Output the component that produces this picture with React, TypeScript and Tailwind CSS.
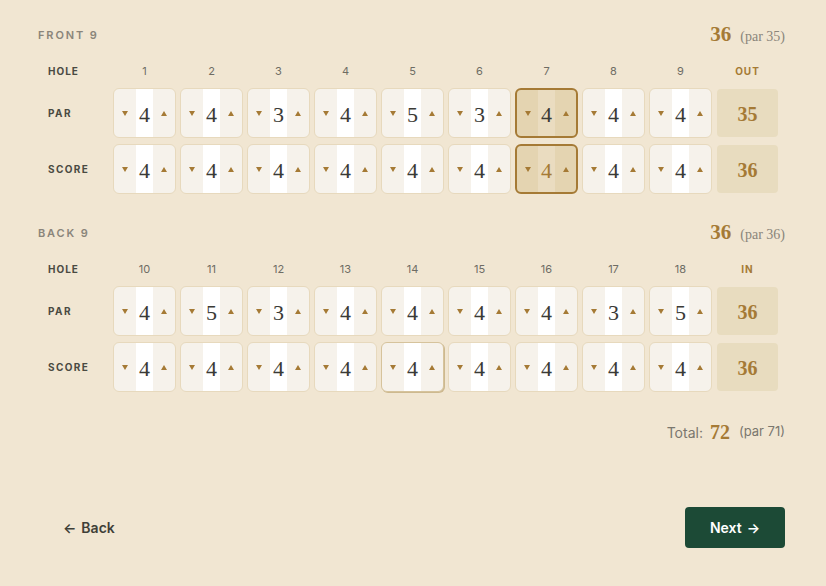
import React from "react"

type Nine = {
  title: string
  total: string
  holes: number[]
  par: number[]
  score: number[]
  sumLabel: string
}

const nines: Nine[] = [
  {
    title: "FRONT 9",
    total: "36",
    holes: [1, 2, 3, 4, 5, 6, 7, 8, 9],
    par: [4, 4, 3, 4, 5, 3, 4, 4, 4],
    score: [4, 4, 4, 4, 4, 4, 4, 4, 4],
    sumLabel: "OUT",
  },
  {
    title: "BACK 9",
    total: "36",
    holes: [10, 11, 12, 13, 14, 15, 16, 17, 18],
    par: [4, 5, 3, 4, 4, 4, 4, 3, 5],
    score: [4, 4, 4, 4, 4, 4, 4, 4, 4],
    sumLabel: "IN",
  },
]

const sans = "font-['Inter','Liberation_Sans',sans-serif]"
const serif = "font-['Liberation_Serif','DejaVu_Serif',serif]"

function Down() {
  return (
    <svg width="6" height="5" viewBox="0 0 6 5">
      <path d="M0 0h6L3 5z" fill="#a57a35" />
    </svg>
  )
}

function Up() {
  return (
    <svg width="6" height="5" viewBox="0 0 6 5">
      <path d="M0 5h6L3 0z" fill="#a57a35" />
    </svg>
  )
}

function Stepper({ value, active, hover, gold }: { value: number; active?: boolean; hover?: boolean; gold?: boolean }) {
  const box = active
    ? "border-2 border-[#a57a35] bg-[#e4d4b1]"
    : hover
      ? "border border-[#d6c39c] bg-[#f6f2eb] shadow-[1px_1px_0_#cdb98f]"
      : "border border-[#e7d9bd] bg-[#f6f2eb]"
  return (
    <div className={`flex h-[50px] w-[63px] shrink-0 overflow-hidden rounded-[6px] ${box}`}>
      <div className="flex flex-1 items-center justify-center">
        <Down />
      </div>
      <div
        className={`flex w-[17px] items-center justify-center pt-[3px] text-[22px] ${serif} ${
          active ? "bg-[#eadcc0]" : "bg-white"
        } ${gold ? "text-[#a57a35]" : "text-[#3a3a36]"}`}
      >
        {value}
      </div>
      <div className="flex flex-1 items-center justify-center">
        <Up />
      </div>
    </div>
  )
}

function SumBox({ value }: { value: number }) {
  return (
    <div
      className={`ml-[5px] flex h-[48px] w-[61px] shrink-0 items-center justify-center rounded-[4px] bg-[#e8dcbf] pt-[2px] text-[20px] font-bold text-[#a57a35] ${serif}`}
    >
      {value}
    </div>
  )
}

function Section({ nine, index }: { nine: Nine; index: number }) {
  const parSum = nine.par.reduce((a, b) => a + b, 0)
  const scoreSum = nine.score.reduce((a, b) => a + b, 0)
  return (
    <div>
      <div className="flex h-[28px] items-center justify-between">
        <span className={`text-[11px] font-semibold tracking-[0.17em] text-[#8a857a] ${sans}`}>{nine.title}</span>
        <span className={`flex items-baseline gap-[9px] ${serif}`}>
          <span className="text-[21px] font-bold text-[#a57a35]">{nine.total}</span>
          <span className="text-[14px] text-[#8a857a]">(par {parSum})</span>
        </span>
      </div>

      <div className="mt-[14px] flex h-[16px] items-center">
        <div className={`w-[75px] shrink-0 pl-[10px] text-[10px] font-bold tracking-[0.1em] text-[#4a4a42] ${sans}`}>HOLE</div>
        <div className="flex gap-1">
          {nine.holes.map((h) => (
            <div key={h} className={`w-[63px] text-center text-[11px] text-[#6e6c64] ${sans}`}>
              {h}
            </div>
          ))}
        </div>
        <div className={`ml-[5px] w-[61px] text-center text-[10px] font-bold tracking-[0.1em] text-[#a57a35] ${sans}`}>
          {nine.sumLabel}
        </div>
      </div>

      <div className="mt-[9px] flex flex-col gap-[6px]">
        {[
          { label: "PAR", values: nine.par, sum: parSum },
          { label: "SCORE", values: nine.score, sum: scoreSum },
        ].map((row, r) => (
          <div key={row.label} className="flex items-center">
            <div className={`w-[75px] shrink-0 pl-[10px] text-[10px] font-bold tracking-[0.14em] text-[#4a4a42] ${sans}`}>
              {row.label}
            </div>
            <div className="flex gap-1">
              {row.values.map((v, i) => (
                <Stepper
                  key={i}
                  value={v}
                  active={index === 0 && i === 6}
                  gold={index === 0 && i === 6 && r === 1}
                  hover={index === 1 && i === 4 && r === 1}
                />
              ))}
            </div>
            <SumBox value={row.sum} />
          </div>
        ))}
      </div>
    </div>
  )
}

export default function App() {
  return (
    <div className={`min-h-[586px] w-full bg-[#f1e6d2] pl-[38px] pr-[41px] pt-[21px] ${sans}`}>
      <div className="flex flex-col gap-[25px]">
        {nines.map((n, i) => (
          <Section key={n.title} nine={n} index={i} />
        ))}
      </div>

      <div className="mt-[29px] flex h-[22px] items-center justify-end gap-[7px]">
        <span className="text-[14px] text-[#7a776e]">Total:</span>
        <span className={`text-[20px] font-bold text-[#a57a35] ${serif}`}>72</span>
        <span className="ml-[2px] text-[13px] text-[#7a776e]">(par 71)</span>
      </div>

      <div className="mt-[64px] flex items-center justify-between">
        <button className="flex h-[41px] items-center gap-[5px] px-[25px] text-[14px] font-semibold text-[#3f3f38]">
          <span>←</span>
          <span>Back</span>
        </button>
        <button className="flex h-[41px] w-[100px] items-center justify-center gap-[5px] rounded-[4px] bg-[#1c4a36] text-[14px] font-semibold text-white">
          <span>Next</span>
          <span>→</span>
        </button>
      </div>
    </div>
  )
}
